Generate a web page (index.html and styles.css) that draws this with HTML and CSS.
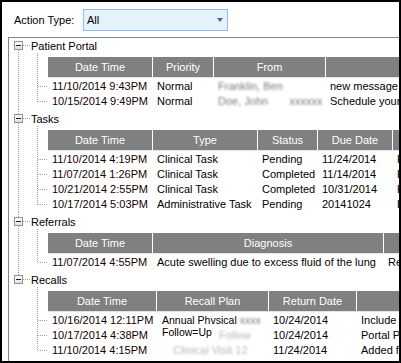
FILE: index.html
```html
<!DOCTYPE html>
<html lang="en">
<head>
  <meta charset="UTF-8">
  <title>Patient Activity</title>
  <link rel="stylesheet" href="styles.css">
</head>
<body>
  <div class="window">
    <div class="filter">
      <label class="filter-label">Action Type:</label>
      <div class="combo"><span class="combo-value">All</span><span class="combo-arrow"></span></div>
    </div>

    <div class="tree">
      <!-- Patient Portal -->
      <div class="node first">
        <div class="node-head"><span class="expander"></span><span class="stub"></span><span class="node-label">Patient Portal</span></div>
        <div class="children">
          <div class="row head-row">
            <span class="branch"></span>
            <div class="cells portal-cols">
              <span class="hc">Date Time</span><span class="hc">Priority</span><span class="hc">From</span><span class="hc"></span>
            </div>
          </div>
          <div class="row">
            <span class="branch"></span>
            <div class="cells portal-cols">
              <span class="dc date">11/10/2014 9:43PM</span><span class="dc">Normal</span><span class="dc blur">Franklin, Ben</span><span class="dc">new message</span>
            </div>
          </div>
          <div class="row">
            <span class="branch"></span>
            <div class="cells portal-cols">
              <span class="dc date">10/15/2014 9:49PM</span><span class="dc">Normal</span><span class="dc blur">Doe, John &nbsp;&nbsp;&nbsp;&nbsp;&nbsp; xxxxxx</span><span class="dc">Schedule your</span>
            </div>
          </div>
        </div>
      </div>

      <!-- Tasks -->
      <div class="node">
        <div class="node-head"><span class="expander"></span><span class="stub"></span><span class="node-label">Tasks</span></div>
        <div class="children">
          <div class="row head-row">
            <span class="branch"></span>
            <div class="cells task-cols">
              <span class="hc">Date Time</span><span class="hc">Type</span><span class="hc">Status</span><span class="hc">Due Date</span><span class="hc"></span>
            </div>
          </div>
          <div class="row">
            <span class="branch"></span>
            <div class="cells task-cols">
              <span class="dc date">11/10/2014 4:19PM</span><span class="dc">Clinical Task</span><span class="dc">Pending</span><span class="dc">11/24/2014</span><span class="dc">R</span>
            </div>
          </div>
          <div class="row">
            <span class="branch"></span>
            <div class="cells task-cols">
              <span class="dc date">11/07/2014 1:26PM</span><span class="dc">Clinical Task</span><span class="dc">Completed</span><span class="dc">11/14/2014</span><span class="dc">R</span>
            </div>
          </div>
          <div class="row">
            <span class="branch"></span>
            <div class="cells task-cols">
              <span class="dc date">10/21/2014 2:55PM</span><span class="dc">Clinical Task</span><span class="dc">Completed</span><span class="dc">10/31/2014</span><span class="dc">R</span>
            </div>
          </div>
          <div class="row">
            <span class="branch"></span>
            <div class="cells task-cols">
              <span class="dc date">10/17/2014 5:03PM</span><span class="dc">Administrative Task</span><span class="dc">Pending</span><span class="dc">20141024</span><span class="dc">R</span>
            </div>
          </div>
        </div>
      </div>

      <!-- Referrals -->
      <div class="node">
        <div class="node-head"><span class="expander"></span><span class="stub"></span><span class="node-label">Referrals</span></div>
        <div class="children">
          <div class="row head-row">
            <span class="branch"></span>
            <div class="cells referral-cols">
              <span class="hc">Date Time</span><span class="hc">Diagnosis</span><span class="hc"></span>
            </div>
          </div>
          <div class="row">
            <span class="branch"></span>
            <div class="cells referral-cols">
              <span class="dc date">11/07/2014 4:55PM</span><span class="dc">Acute swelling due to excess fluid of the lung</span><span class="dc">Re</span>
            </div>
          </div>
        </div>
      </div>

      <!-- Recalls -->
      <div class="node last">
        <div class="node-head"><span class="expander"></span><span class="stub"></span><span class="node-label">Recalls</span></div>
        <div class="children">
          <div class="row head-row">
            <span class="branch"></span>
            <div class="cells recall-cols">
              <span class="hc">Date Time</span><span class="hc">Recall Plan</span><span class="hc">Return Date</span><span class="hc"></span>
            </div>
          </div>
          <div class="row">
            <span class="branch"></span>
            <div class="cells recall-cols">
              <span class="dc date">10/16/2014 12:11PM</span>
              <span class="dc plan"><span>Annual Phvsical <span class="blur">xxxx</span></span><span>Follow=Up</span></span>
              <span class="dc">10/24/2014</span><span class="dc">Include</span>
            </div>
          </div>
          <div class="row">
            <span class="branch"></span>
            <div class="cells recall-cols">
              <span class="dc date">10/17/2014 4:38PM</span><span class="dc blur faint pushed">Follow</span><span class="dc">10/24/2014</span><span class="dc">Portal P</span>
            </div>
          </div>
          <div class="row">
            <span class="branch"></span>
            <div class="cells recall-cols">
              <span class="dc date">11/10/2014 4:15PM</span><span class="dc blur faint">&nbsp;&nbsp;&nbsp; Clinical Visit 12</span><span class="dc">11/24/2014</span><span class="dc">Added fr</span>
            </div>
          </div>
        </div>
      </div>
    </div>
  </div>
</body>
</html>
```

FILE: styles.css
```css
body { margin: 0; background: #fff; color: #000; font-family: "Liberation Sans", Arial, sans-serif; font-size: 11px; }
.window { width: 401px; height: 363px; box-sizing: border-box; border: 2px solid #000; display: flex; flex-direction: column; overflow: hidden; background: #fff; }

/* filter bar */
.filter { display: flex; align-items: center; padding: 7px 0 0 12px; height: 22px; flex: none; }
.filter-label { width: 69px; font-size: 11px; }
.combo { width: 145px; height: 22px; box-sizing: border-box; border: 1px solid #8fbfee; background: #e5f1fb; display: flex; align-items: center; }
.combo-value { padding-left: 3px; }
.combo-arrow { margin-left: auto; margin-right: 4px; width: 0; height: 0; border-top: 4px solid #4f6482; border-left: 3.5px solid transparent; border-right: 3.5px solid transparent; }

/* tree */
.tree { margin: 6px 0 0 6px; width: 600px; flex: 1; border-top: 1px solid #828790; border-left: 1px solid #828790; }
.node { padding-top: 2px; background: repeating-linear-gradient(to bottom, #a0a0a0 0 1px, transparent 1px 2px) no-repeat 9px 0 / 1px 100%; }
.node.first { padding-top: 0; background-position: 9px 8px; }
.node.last { background-size: 1px 10px; }
.node-head { display: flex; align-items: center; height: 15px; }
.expander { margin-left: 5px; width: 9px; height: 9px; box-sizing: border-box; border: 1px solid #919191; background: linear-gradient(#fdfdfd, #e2e2e2); display: flex; align-items: center; justify-content: center; }
.expander::before { content: ""; width: 5px; height: 1px; background: #1e1e1e; }
.stub { width: 7px; height: 1px; margin-right: 1px; background: repeating-linear-gradient(to right, #a0a0a0 0 1px, transparent 1px 2px); }
.node-label { font-size: 11px; }

.children { padding: 4px 0 0 28px; background: repeating-linear-gradient(to bottom, #a0a0a0 0 1px, transparent 1px 2px) no-repeat 28px 0 / 1px calc(100% - 7px); }
.row { display: flex; height: 15px; }
.row.head-row { height: 20px; margin-bottom: 2px; }
.branch { width: 11px; flex: none; background: repeating-linear-gradient(to right, #a0a0a0 0 1px, transparent 1px 2px) no-repeat 1px 7px / 10px 1px; }
.head-row .branch { background: none; }

.cells { display: grid; column-gap: 1px; }
.portal-cols { grid-template-columns: 104px 60px 111px 120px; }
.task-cols { grid-template-columns: 104px 104px 59px 74px 120px; }
.referral-cols { grid-template-columns: 104px 230px 120px; }
.recall-cols { grid-template-columns: 108px 111px 87px 120px; }

.hc { background: #808080; color: #fff; text-align: center; line-height: 20px; font-size: 11px; white-space: nowrap; overflow: hidden; border-bottom: 1px solid #dde6ef; box-sizing: border-box; height: 21px; }
.dc { padding-left: 4px; line-height: 15px; white-space: nowrap; overflow: hidden; }
.date { color: #140000; }
.blur { filter: blur(1.1px); color: #7a7a7a; }
.faint { color: #b8b8b8; }
.pushed { padding-left: 62px; }
.plan { display: flex; flex-direction: column; padding-left: 5px; overflow: visible; font-size: 10.5px; line-height: 12px; padding-top: 1px; }
```
